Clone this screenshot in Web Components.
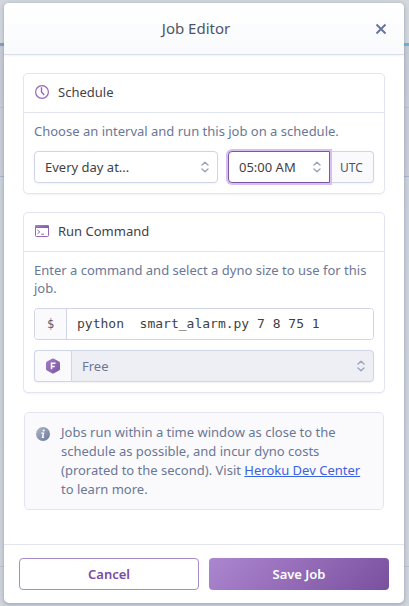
<!DOCTYPE html>
<html lang="en">
<head>
<meta charset="utf-8">
<meta name="viewport" content="width=device-width, initial-scale=1">
<title>Job Editor</title>
<style>
  html { height: 100%; }
  body {
    margin: 0; min-height: 100vh; box-sizing: border-box; padding: 3px 5px 3px 4px;
    display: flex; flex-direction: column;
    font: 13px/18px "Noto Sans", "Open Sans", sans-serif; color: #3f3f44;
    background:
      linear-gradient(transparent 107px, #bcc1ce 107px, #bcc1ce 108px, transparent 108px),
      linear-gradient(transparent 176px, #a9b4cb 176px, #a9b4cb 177px, transparent 177px),
      linear-gradient(transparent 566px, #bcc1ce 566px, #bcc1ce 567px, transparent 567px),
      linear-gradient(90deg, #809bc6, #78b0cc) 0 43px / 100% 3px no-repeat,
      linear-gradient(#d3d7dc 43px, #c8ccd5 46px, #cbced7 176px, #ccd2d9 177px, #d0d4db);
    --purple: #79589f; --text: #6b7796; --line: #e2e4ef; --control: #cfd4e8;
  }
</style>
</head>
<body>
<modal-dialog heading="Job Editor">
  <panel-card heading="Schedule">
    <svg slot="icon" width="14" height="14" viewBox="0 0 14 14" fill="none" stroke="#9765b9"><circle cx="7" cy="7" r="6.4" stroke-width="1.2"/><path d="M6.500 2.300V7l2.700 2.900" stroke-width="1.400"/></svg>
    <span>Choose an interval and run this job on a schedule.</span>
    <field-row>
      <select-field label="Interval" value="Every day at..."></select-field>
      <select-field label="Time of day" value="05:00 AM" active suffix="UTC"></select-field>
    </field-row>
  </panel-card>
  <panel-card heading="Run Command">
    <svg slot="icon" width="14" height="14" viewBox="0 0 14 14" fill="none"><defs><linearGradient id="g" x2="1" y2="1"><stop stop-color="#ab82cf"/><stop offset="1" stop-color="#79589f"/></linearGradient></defs><rect x=".5" y="1.5" width="13" height="11" rx="1" stroke="#9468b5"/><path d="M0 4V2.4Q0 1 1.4 1h11.2Q14 1 14 2.4V4z" fill="url(#g)"/><path d="M2.500 6l2.300 1.900-2.300 2M6.200 10.200H9" stroke="#8e62b1"/></svg>
    <span>Enter a command and select a dyno size to use for this job.</span>
    <command-field value="python  smart_alarm.py 7 8 75 1"></command-field>
    <select-field label="Dyno size" value="Free" disabled>
      <svg slot="prefix" width="16" height="16" viewBox="0 0 16 16"><defs><linearGradient id="h" x2="1" y2="1"><stop stop-color="#a77bca"/><stop offset="1" stop-color="#79589f"/></linearGradient></defs><path d="M7 .7q1-.5 2 0l5 2.8q1 .5 1 1.6v5.8q0 1.1-1 1.6l-5 2.8q-1 .5-2 0l-5-2.8q-1-.5-1-1.6V5.100q0-1.100 1-1.600z" fill="url(#h)"/><path d="M6.500 11.300V5.300h4M6.500 8.400h3.300" stroke="#fff" stroke-width="1.500" fill="none"/></svg>
    </select-field>
  </panel-card>
  <info-note>Jobs run within a time window as close to the schedule as possible, and incur dyno costs (prorated to the second). Visit <a href="#dev-center">Heroku Dev Center</a> to learn more.</info-note>
  <action-button slot="footer">Cancel</action-button>
  <action-button slot="footer" primary>Save Job</action-button>
</modal-dialog>
<script>
const define = (name, render) => customElements.define(name, class extends HTMLElement {
  constructor() { super(); this.attachShadow({ mode: "open" }); }
  connectedCallback() {
    const t = document.createElement("template");
    t.innerHTML = "<style>*{box-sizing:border-box}:host{display:block;box-sizing:border-box}</style>" + render(this);
    this.shadowRoot.replaceChildren(t.content.cloneNode(true));
  }
});

define("modal-dialog", el => `<style>
  :host { flex: 1; display: flex; flex-direction: column; background: #fff; border-radius: 5px; overflow: hidden; box-shadow: 0 1px 4px #6d7d9999; }
  header { display: grid; grid-template-columns: 30px 1fr 46px; align-items: center; height: 52px; border-bottom: 1px solid #d8dfe8; background: linear-gradient(#fff, #f9fafd); box-shadow: 0 1px 2px #d8dfe855; }
  h1 { grid-column: 2; margin: 0; padding-bottom: 2px; text-align: center; font-size: 15px; line-height: 20px; font-weight: 400; color: #4e5468; }
  button { border: 0; padding: 0; height: 32px; background: none; display: grid; place-items: center; }
  main { flex: 1; display: flex; flex-direction: column; gap: 20px; padding: 19px 20px; }
  footer { display: grid; grid-template-columns: 1fr 1fr; gap: 10px; padding: 13px 15px; border-top: 1px solid #e4e4ed; }
</style>
<header><h1>${el.getAttribute("heading")}</h1><button type="button" aria-label="Close"><svg width="12" height="12" viewBox="0 0 12 12" stroke="#68759a" stroke-width="2"><path d="M1.500 1.500l9 9M10.500 1.500l-9 9"/></svg></button></header>
<main><slot></slot></main><footer><slot name="footer"></slot></footer>`);

define("panel-card", el => `<style>
  :host { border-radius: 4px; box-shadow: 0 0 0 1px var(--line), 0 2px 3px #d8dbe855; }
  header { display: flex; align-items: center; gap: 9px; height: 39px; padding: 0 11px 2px; border-bottom: 1px solid var(--line); }
  h2 { margin: 0; font-size: 13px; line-height: 18px; font-weight: 400; color: #3f3f4c; }
  .body { display: flex; flex-direction: column; gap: 11px; padding: 9px 10px 10px; color: var(--text); }
  ::slotted(select-field:last-child) { margin-top: -1px; }
</style><header><slot name="icon"></slot><h2>${el.getAttribute("heading")}</h2></header><div class="body"><slot></slot></div>`);

define("field-row", () => `<style>:host { display: grid; grid-template-columns: 184fr 146fr; gap: 10px; }</style><slot></slot>`);

define("select-field", el => {
  const off = el.hasAttribute("disabled"), on = el.hasAttribute("active"), suffix = el.getAttribute("suffix");
  return `<style>
  :host { display: flex; height: 32px; border-radius: 4px; box-shadow: 0 1px 2px #d8dbe855; }
  .pre, .post { display: grid; place-items: center; border: 1px solid var(--control); background: #fafafd; }
  .pre { width: 37px; border-right: 0; border-radius: 4px 0 0 4px; }
  .post { width: 44px; padding-top: 2px; border-left: 0; border-radius: 0 4px 4px 0; color: #51515b; font-size: 12px; }
  .box { flex: 1; min-width: 0; display: grid; align-items: center; position: relative; }
  select { grid-area: 1/1; appearance: none; width: 100%; height: 32px; margin: 0; padding: 0 24px 0 10px; border: 1px solid var(--control); border-radius: ${off ? "0 4px 4px 0" : on ? "4px 0 0 4px" : "4px"}; background: ${off ? "#eeeff5" : "#fff"}; font: inherit; color: ${off ? "var(--text)" : "#3f3f44"}; opacity: 1; outline: 0; ${on ? "border-color: #79589f; box-shadow: 0 0 0 2px #d8bfee;" : ""} }
  .box svg { grid-area: 1/1; justify-self: end; margin-right: 8px; pointer-events: none; }
  </style>${off ? '<div class="pre"><slot name="prefix"></slot></div>' : ""}
  <div class="box"><select aria-label="${el.getAttribute("label")}" ${off ? "disabled" : ""}><option>${el.getAttribute("value")}</option></select>
  <svg width="10" height="12" viewBox="0 0 10 12" fill="none" stroke="#9aa5bf" stroke-width="1.500" stroke-linecap="round" stroke-linejoin="round"><path d="M2 4l3-2.700L8 4M2 8l3 2.700L8 8"/></svg></div>
  ${suffix ? `<div class="post">${suffix}</div>` : ""}`;
});

define("command-field", el => `<style>
  :host { display: flex; height: 32px; border: 1px solid var(--control); border-radius: 4px; overflow: hidden; }
  label { display: grid; place-items: center; width: 31px; background: #fafafd; color: #55596c; font-family: "DejaVu Sans Mono", monospace; font-size: 12px; }
  input { flex: 1; min-width: 0; margin: 0; border: 0; border-left: 1px solid var(--control); padding: 0 10px; outline: 0; background: #fff; color: #3f3f44; font: 13px/18px "DejaVu Sans Mono", monospace; }
</style><label for="command">$</label><input id="command" type="text" aria-label="Command" value="${el.getAttribute("value")}">`);

define("info-note", () => `<style>
  :host { display: grid; grid-template-columns: 14px 1fr; gap: 11px; padding: 10px 16px 10px 11px; border: 1px solid var(--line); border-radius: 5px; background: #fafafd; color: var(--text); line-height: 19px; }
  svg { margin-top: 4px; }
  ::slotted(a) { color: #3b61e4; text-decoration: underline; }
</style><svg width="14" height="14" viewBox="0 0 14 14"><defs><linearGradient id="i" x2="1" y2="1"><stop stop-color="#b1bacd"/><stop offset="1" stop-color="#68759a"/></linearGradient></defs><circle cx="7" cy="7" r="7" fill="url(#i)"/><circle cx="7.700" cy="3.500" r="1.100" fill="#fff"/><path d="M5.300 6.100h2.200l-1 4.300h1.600" stroke="#fff" stroke-width="1.400" fill="none"/></svg><div><slot></slot></div>`);

define("action-button", el => `<style>
  button { display: block; width: 100%; height: 32px; padding: 0; border: 1px solid #a78bc6; border-radius: 4px; background: #fff; color: #7b4ba5; font: inherit; font-weight: 600; }
  :host([primary]) button { border: 0; color: #fff; background: linear-gradient(135deg, #ad86d0, #79509e); }
</style><button type="button"><slot></slot></button>`);
</script>
</body>
</html>
